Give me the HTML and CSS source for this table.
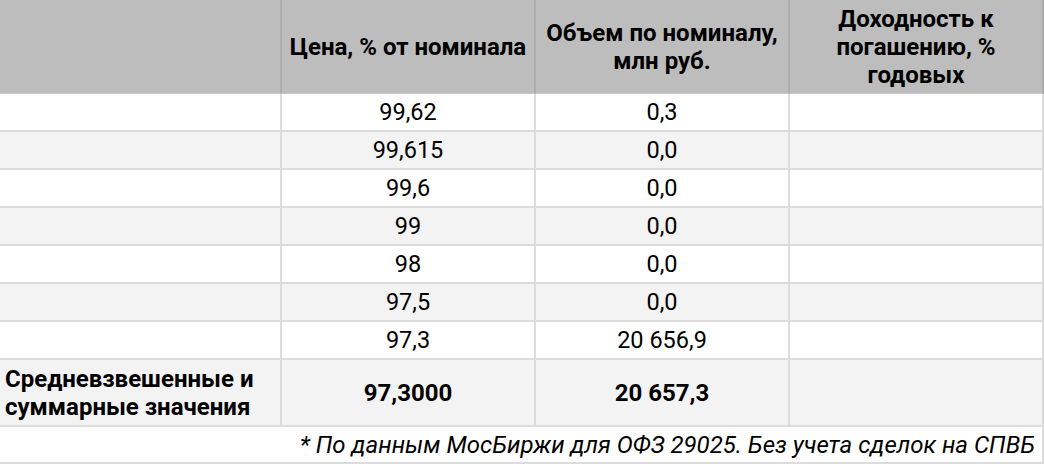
FILE: index.html
```html
<!DOCTYPE html>
<html lang="ru">
<head>
<meta charset="utf-8">
<link rel="stylesheet" href="styles.css">
</head>
<body>
<table class="grid">
  <colgroup>
    <col class="c-label">
    <col class="c-val">
    <col class="c-val">
    <col class="c-val">
  </colgroup>
  <thead>
    <tr class="head">
      <th></th>
      <th>Цена, % от номинала</th>
      <th>Объем по номиналу,<br>млн руб.</th>
      <th>Доходность к<br>погашению, %<br>годовых</th>
    </tr>
  </thead>
  <tbody>
    <tr class="row"><td></td><td>99,62</td><td>0,3</td><td></td></tr>
    <tr class="row alt"><td></td><td>99,615</td><td>0,0</td><td></td></tr>
    <tr class="row"><td></td><td>99,6</td><td>0,0</td><td></td></tr>
    <tr class="row alt"><td></td><td>99</td><td>0,0</td><td></td></tr>
    <tr class="row"><td></td><td>98</td><td>0,0</td><td></td></tr>
    <tr class="row alt"><td></td><td>97,5</td><td>0,0</td><td></td></tr>
    <tr class="row"><td></td><td>97,3</td><td>20 656,9</td><td></td></tr>
    <tr class="sum alt">
      <td class="sum-label">Средневзвешенные и<br>суммарные значения</td>
      <td>97,3000</td>
      <td>20 657,3</td>
      <td></td>
    </tr>
    <tr class="note"><td colspan="4">* По данным МосБиржи для ОФЗ 29025. Без учета сделок на СПВБ</td></tr>
  </tbody>
</table>
</body>
</html>
```
FILE: styles.css
```css
html, body {
  margin: 0;
  padding: 0;
  background: #ffffff;
}
body {
  font-family: Roboto, "Liberation Sans", sans-serif;
  color: #000;
}
.grid {
  table-layout: fixed;
  border-collapse: separate;
  border-spacing: 0;
  width: 1044px;
}
.c-label { width: 282px; }
.c-val { width: 254px; }

.grid th, .grid td {
  padding: 0;
  border-right: 2px solid #dcdcdc;
  border-bottom: 2px solid #dcdcdc;
  text-align: center;
  vertical-align: middle;
  box-sizing: border-box;
}
.head th {
  background: #bdbdbd;
  border-right-color: #adadad;
  border-bottom: 1px solid #c8c8c8;
  height: 94px;
  font-weight: 700;
  font-size: 24px;
  line-height: 28px;
}
.row td {
  height: 38px;
  font-size: 23.5px;
  font-weight: 400;
}
.alt td { background: #f3f3f3; }
.sum td {
  height: 67px;
  font-size: 24px;
  font-weight: 700;
}
.sum .sum-label {
  text-align: left;
  padding-left: 5px;
  font-size: 24px;
  line-height: 28px;
}
.note td {
  height: 37px;
  text-align: right;
  font-style: italic;
  font-size: 24px;
  padding-right: 7px;
  background: #fff;
}
```
